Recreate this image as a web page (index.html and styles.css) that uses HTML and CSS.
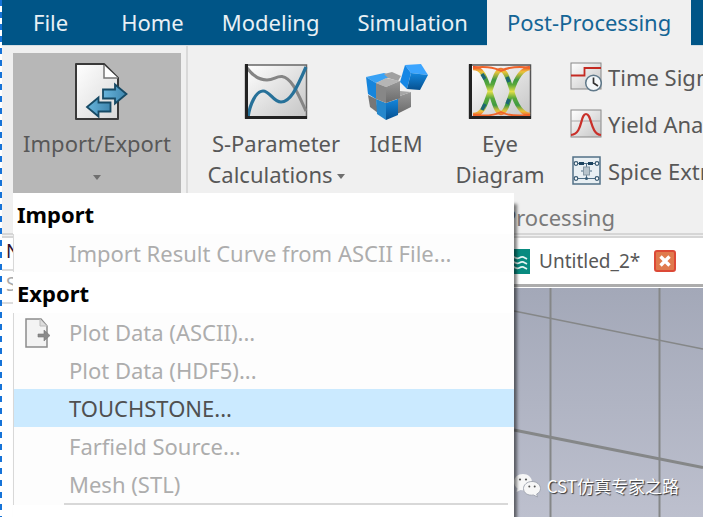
FILE: index.html
```html
<!DOCTYPE html>
<html lang="en">
<head>
<meta charset="utf-8">
<title>Post-Processing</title>
<link rel="stylesheet" href="styles.css">
</head>
<body>
<div class="app">
  <nav class="tabs">
    <a class="tab tab-file" href="#">File</a>
    <a class="tab" href="#">Home</a>
    <a class="tab" href="#">Modeling</a>
    <a class="tab" href="#">Simulation</a>
    <a class="tab tab-active" href="#">Post-Processing</a>
  </nav>

  <section class="ribbon">
    <div class="tools">
      <div class="import-group">
        <button class="tool tool-open" type="button">
          <svg class="icon" width="64" height="64" viewBox="0 0 64 64">
            <defs>
              <linearGradient id="paper" x1="0" y1="0" x2="1" y2="1"><stop offset="0" stop-color="#fff"/><stop offset="1" stop-color="#d8d8d8"/></linearGradient>
              <linearGradient id="arrow" x1="0" y1="0" x2="1" y2="0"><stop offset="0" stop-color="#67b4dc"/><stop offset="1" stop-color="#3f86ae"/></linearGradient>
            </defs>
            <path d="M11 4H39L53 18V59H11Z" fill="url(#paper)" stroke="#393939" stroke-width="2" stroke-linejoin="round"/>
            <path d="M39 5V18H53" fill="#fff" stroke="#777" stroke-width="1.500"/>
            <path d="M38 29.500H50V24.500L61.500 34L50 43.500V38.500H38Z" fill="url(#arrow)" stroke="#174a65" stroke-width="1.800"/>
            <path d="M45.500 42.500H33.500V37.500L22 47L33.500 56.500V51.500H45.500Z" fill="url(#arrow)" stroke="#174a65" stroke-width="1.800"/>
          </svg>
          <span>Import/Export</span>
          <span class="caret-row"><i class="caret"></i></span>
        </button>

        <div class="menu" role="menu">
          <h2 class="menu-title">Import</h2>
          <div class="menu-items">
            <button class="menu-item" role="menuitem" type="button" disabled>Import Result Curve from ASCII File...</button>
          </div>
          <h2 class="menu-title">Export</h2>
          <div class="menu-items">
            <button class="menu-item" role="menuitem" type="button" disabled>
              <svg class="menu-icon" width="26" height="30" viewBox="0 0 26 30">
                <path d="M1 1H16L22 8V29H1Z" fill="#f3f3f3" stroke="#8c8c8c" stroke-width="1.500"/>
                <path d="M15 1V8H22" fill="#ddd" stroke="#bbb"/>
                <path d="M13 16H19V12L25 17.500L19 23V19H13Z" fill="#8a8a8a" stroke="#777" stroke-width=".6"/>
              </svg>Plot Data (ASCII)...</button>
            <button class="menu-item" role="menuitem" type="button" disabled>Plot Data (HDF5)...</button>
            <button class="menu-item menu-item-hot" role="menuitem" type="button">TOUCHSTONE...</button>
            <button class="menu-item" role="menuitem" type="button" disabled>Farfield Source...</button>
            <button class="menu-item" role="menuitem" type="button" disabled>Mesh (STL)</button>
            <hr class="menu-rule">
          </div>
        </div>
      </div>

      <button class="tool tool-wide" type="button">
        <svg class="icon" width="64" height="56" viewBox="0 0 64 56">
          <defs><linearGradient id="plot" x1="0" y1="0" x2="1" y2="1"><stop offset="0" stop-color="#fff"/><stop offset="1" stop-color="#c4c4c4"/></linearGradient></defs>
          <rect x="1.500" y="1" width="61" height="53" fill="url(#plot)" stroke="#666" stroke-width="1.500"/>
          <path d="M3 4C9 12 15 16 23 16C30 16 32 12 38 12.500C48 14 54 30 62 47" fill="none" stroke="#858585" stroke-width="3"/>
          <path d="M4 53C6 40 12 27 19 27C26 27 29 38 37 38C46 38 52 26 62 3" fill="none" stroke="#277199" stroke-width="3.200"/>
          <path d="M2.500 0V53.500H63" fill="none" stroke="#222" stroke-width="3"/>
        </svg>
        <span>S-Parameter</span>
        <span>Calculations<i class="caret caret-inline"></i></span>
      </button>

      <button class="tool tool-narrow" type="button">
        <svg class="icon" width="64" height="58" viewBox="0 0 64 58">
          <defs>
            <linearGradient id="blue" x1="0" y1="0" x2="0" y2="1"><stop offset="0" stop-color="#1487de"/><stop offset="1" stop-color="#06508f"/></linearGradient>
            <linearGradient id="gray" x1="0" y1="0" x2="0" y2="1"><stop offset="0" stop-color="#989898"/><stop offset="1" stop-color="#6b6b6b"/></linearGradient>
          </defs>
          <path d="M4 32L12 36L14 50L6 44Z" fill="#777"/>
          <path d="M33 34L47 29V44L33 51Z" fill="url(#gray)"/>
          <path d="M33 34L36 28L47 29Z" fill="#a6a6a6"/>
          <path d="M12 36L22 40V57L13 51Z" fill="#2587cc"/>
          <path d="M22 40L34 36V52L22 57Z" fill="url(#blue)"/>
          <path d="M2 14L20 10L28 13L12 20Z" fill="#39a2f5"/>
          <path d="M20 11L28 9L37 13L34 18L24 15Z" fill="#a0a0a0"/>
          <path d="M2 14L12 20V36L4 31Z" fill="#1685dc"/>
          <path d="M12 20L22 15L36 18L22 24Z" fill="#b5b5b5"/>
          <path d="M12 20L22 24V40L12 36Z" fill="#878787"/>
          <path d="M22 24L36 18V35L22 40Z" fill="url(#gray)"/>
          <path d="M41 2L57 1L64 12L47 10Z" fill="#3ca5ff"/>
          <path d="M41 2L47 10L43 26L36 19Z" fill="#1587e5"/>
          <path d="M47 10L64 12L56 27L43 26Z" fill="url(#blue)"/>
        </svg>
        <span>IdEM</span>
      </button>

      <button class="tool tool-medium" type="button">
        <svg class="icon" width="64" height="56" viewBox="0 0 64 56">
          <defs><linearGradient id="eye" gradientUnits="userSpaceOnUse" x1="0" y1="3" x2="0" y2="52"><stop offset="0" stop-color="#f0542b"/><stop offset=".1" stop-color="#ecc43a"/><stop offset=".26" stop-color="#3f9a42"/><stop offset=".36" stop-color="#58a83c"/><stop offset=".5" stop-color="#e2df48"/><stop offset=".64" stop-color="#58a83c"/><stop offset=".78" stop-color="#3f9a42"/><stop offset=".9" stop-color="#ecc43a"/><stop offset="1" stop-color="#f0542b"/></linearGradient></defs>
          <rect x="1.500" y="1" width="61" height="53" fill="url(#plot)" stroke="#555" stroke-width="1.500"/>
          <g fill="none" stroke="url(#eye)" stroke-width="4.500">
            <path d="M5 4C16 4 18 17 22 27C26 38 28 49 33 49C38 49 41 36 44 27C48 14 54 5 62 4"/>
            <path d="M5 51C16 51 18 37 22 27C26 17 28 6 33 6C38 6 41 18 44 27C48 41 54 50 62 51"/>
          </g>
          <path d="M5 4C14 2 26 3 33 7C40 3 52 2 62 4M5 51C14 52 26 52 33 48C40 52 52 52 62 51" stroke="#f0642b" stroke-width="2" fill="none"/>
          <path d="M14 10L17 15M39 13L41 18M41 35L39 40M14 46L17 40" stroke="#1c6673" stroke-width="3.500"/>
          <path d="M2.500 0V53.500H63" fill="none" stroke="#222" stroke-width="3"/>
        </svg>
        <span>Eye</span>
        <span>Diagram</span>
      </button>

      <div class="side-tools">
        <button class="side-tool" type="button">
          <svg class="side-icon" width="32" height="30" viewBox="0 0 32 30">
            <rect x="1" y="1" width="30" height="26" fill="url(#plot)" stroke="#888"/>
            <path d="M1 13.500H14.500V6H31" fill="none" stroke="#c42a22" stroke-width="1.800"/>
            <circle cx="23.500" cy="21" r="7.800" fill="#f4f8fa" stroke="#60798a" stroke-width="1.500"/>
            <path d="M23.500 15.500V21L28 24" fill="none" stroke="#333" stroke-width="1.700"/>
          </svg>Time Sign</button>
        <button class="side-tool" type="button">
          <svg class="side-icon" width="32" height="30" viewBox="0 0 32 30">
            <rect x="1" y="1" width="30" height="27" fill="url(#plot)" stroke="#888"/>
            <path d="M1 12H31" stroke="#aaa"/>
            <path d="M1 26C13 25 10 5 16 5C22 5 20 25 31 26" fill="none" stroke="#c9302a" stroke-width="2.200"/>
          </svg>Yield Ana</button>
        <button class="side-tool" type="button">
          <svg class="side-icon" width="32" height="30" viewBox="0 0 32 30">
            <rect x="3" y="1" width="27" height="27" fill="#e8eff3" stroke="#527086" stroke-width="1.500"/>
            <path d="M5 7.500H28M5 22.500H28M16.500 7V23M11 15H22" stroke="#4d6d85"/>
            <path d="M9 7.500H14M18 7.500H23" stroke="#1c435f" stroke-width="3"/>
            <rect x="13.500" y="11" width="6" height="8" fill="#b7c4cc" stroke="#8799a5"/>
            <g fill="#fff" stroke="#385a73" stroke-width="1.200"><circle cx="6" cy="7.500" r="1.800"/><circle cx="27" cy="7.500" r="1.800"/><circle cx="6" cy="22.500" r="1.800"/><circle cx="27" cy="22.500" r="1.800"/></g>
            <circle cx="16.500" cy="22.500" r="1.500" fill="#385a73"/>
          </svg>Spice Extr</button>
      </div>
    </div>
    <div class="group-name">Post-Processing</div>
  </section>

  <main class="work">
    <aside class="tree">
      <div class="tree-title">N</div>
      <div class="tree-search">S</div>
    </aside>
    <section class="document">
      <div class="doc-tabs">
        <svg class="doc-icon" width="18" height="25" viewBox="7 0 18 25">
          <rect width="25" height="25" fill="#098b80"/>
          <path d="M5 9C9 5 10 11 14 9S18 8 22 10M5 14C9 10 10 16 14 14S18 13 22 15M5 19C9 15 10 21 14 19S18 18 22 20" fill="none" stroke="#e5f5f3" stroke-width="1.800"/>
        </svg>
        <span>Untitled_2*</span>
        <button class="close" type="button" aria-label="Close">
          <svg width="12" height="12" viewBox="0 0 12 12"><path d="M1.500 1.500L10.500 10.500M10.500 1.500L1.500 10.500" stroke="#fff" stroke-width="3.400"/></svg>
        </button>
      </div>
      <div class="viewport">
        <svg class="grid-lines" width="100%" height="100%" viewBox="0 0 191 229" preserveAspectRatio="xMinYMin slice">
          <g stroke="#858788" fill="none">
            <path d="M38.500 0V229M147.500 0V229" stroke-width="2"/>
            <path d="M2 23L191 61" stroke-width="1.600"/>
            <path d="M2 142L191 179.500" stroke-width="3"/>
          </g>
        </svg>
        <div class="watermark">
          <svg width="27" height="24" viewBox="0 0 27 24">
            <path d="M9 0C4 0 0 3.500 0 8C0 10.500 1.500 13 3.500 14.500L2.500 18L6.500 16C15 18 18 12 18 8C18 3.500 14 0 9 0Z" fill="#f7f7f7"/>
            <path d="M18 7.500C13 7.500 9.500 11 9.500 14.500C9.500 19 14 22 19.500 21L23.500 23L22.700 20C25 19 26.500 17 26.500 14.500C26.500 11 23 7.500 18 7.500Z" fill="#f7f7f7" stroke="#9da1ad" stroke-width=".9"/>
            <g fill="#555"><circle cx="6" cy="5.500" r="1.100"/><circle cx="12" cy="5.500" r="1.100"/><circle cx="15.300" cy="12.500" r="1"/><circle cx="20.700" cy="12.500" r="1"/></g>
          </svg>
          <span>CST仿真专家之路</span>
        </div>
      </div>
    </section>
  </main>
</div>
</body>
</html>
```
FILE: styles.css
```css
* { box-sizing: border-box; }

body {
  margin: 0;
  font-family: "Noto Sans", "Noto Sans CJK SC", sans-serif;
  font-size: 22px;
  color: #585858;
  background: #fff;
}

button {
  border: 0;
  padding: 0;
  background: none;
  color: inherit;
  font: inherit;
}

.app {
  display: flex;
  flex-direction: column;
  height: 100vh;
  overflow: hidden;
  padding-left: 2px;
  background: repeating-linear-gradient(#1673d8 0 6px, #fff 6px 12px) left top / 2px 100% no-repeat;
}

.tabs {
  display: flex;
  flex: none;
  height: 46px;
  background: #005587;
  border-bottom: 1px solid #d5dde2;
}
.tab {
  height: 46px;
  padding: 0 19px;
  line-height: 44px;
  color: #e8f0f5;
  text-decoration: none;
  white-space: nowrap;
}
.tab-file { padding: 0 34px 0 31px; }
.tab-active { padding: 0 20px; background: #f0f0f0; color: #146596; }

.ribbon {
  flex: none;
  background: #f0f0f0;
  border-bottom: 5px double #d6d6d6;
}
.tools { display: flex; height: 147px; padding-left: 11px; }
.import-group {
  position: relative;
  flex: none;
  padding: 7px 5px 0 0;
  border-right: 2px solid #d9d9d9;
}
.tool {
  display: flex;
  flex: none;
  flex-direction: column;
  align-items: center;
  padding-top: 14px;
  line-height: 31px;
  white-space: nowrap;
}
.icon { flex: none; height: 64px; margin-bottom: 4px; }
.tool-open { width: 168px; height: 140px; padding-top: 7px; background: #b7b7b7; }
.tool-wide { width: 176px; }
.tool-narrow { width: 64px; }
.tool-medium { width: 144px; }
.caret {
  display: inline-block;
  border: 4px solid transparent;
  border-top: 5px solid #6f6f6f;
  border-bottom: 0;
}
.caret-inline { margin-left: 4px; vertical-align: 4px; }
.caret-row { line-height: 24px; }

.side-tools { flex: none; padding-top: 7px; margin-left: -2px; }
.side-tool {
  display: flex;
  align-items: center;
  height: 47px;
  gap: 6px;
  white-space: nowrap;
}
.group-name {
  height: 40px;
  padding-right: 88px;
  text-align: right;
  line-height: 48px;
  color: #7a7a7a;
}

.menu {
  position: absolute;
  z-index: 2;
  top: 100%;
  left: 0;
  width: 501px;
  padding-bottom: 16px;
  background: #fff;
  box-shadow: 3px 11px 3px rgba(0, 0, 0, .5);
}
.menu-title {
  margin: 0;
  padding: 3px 0 0 4px;
  height: 41px;
  font-size: 22px;
  line-height: 36px;
  color: #000;
}
.menu-items { background: #fdfdfd; border-left: 1px solid #d8d8d8; }
.menu-item {
  position: relative;
  display: block;
  width: 100%;
  height: 38px;
  padding-left: 55px;
  text-align: left;
  white-space: nowrap;
  color: #adadad;
}
.menu-item-hot { background: #cbeaff; color: #505050; }
.menu-icon { position: absolute; left: 11px; top: 5px; }
.menu-rule { margin: 0 6px 0 50px; border: 0; border-top: 2px solid #d8d8d8; }

.work { display: flex; flex: 1; min-height: 0; }
.tree { flex: none; width: 510px; background: #fff; }
.tree-title, .tree-search { height: 33px; padding-left: 4px; font-size: 19px; line-height: 26px; border-bottom: 2px solid #dcdcdc; }
.tree-title { color: #301030; }
.tree-search { color: #aaa; }
.document { display: flex; flex: 1; flex-direction: column; min-width: 0; }
.doc-tabs {
  display: flex;
  flex: none;
  align-items: center;
  height: 49px;
  gap: 9px;
  font-size: 19px;
  background: #fff;
  border-bottom: 3px solid #acacac;
}
.close {
  display: grid;
  place-items: center;
  width: 22px;
  height: 22px;
  margin-left: 5px;
  border: 2px solid #dc4936;
  border-radius: 3px;
  background: #e07a4d;
}
.viewport {
  position: relative;
  flex: 1;
  min-height: 0;
  margin-top: 1px;
  overflow: hidden;
  background: linear-gradient(#a3a8b8, #bdc0ce);
}
.grid-lines { display: block; }
.watermark {
  position: absolute;
  right: 24px;
  bottom: 18px;
  display: flex;
  align-items: center;
  gap: 6px;
  font: 17px/26px "Noto Sans CJK SC", sans-serif;
  color: #fff;
  text-shadow: 1px 1px 1px #333;
  white-space: nowrap;
}
```
